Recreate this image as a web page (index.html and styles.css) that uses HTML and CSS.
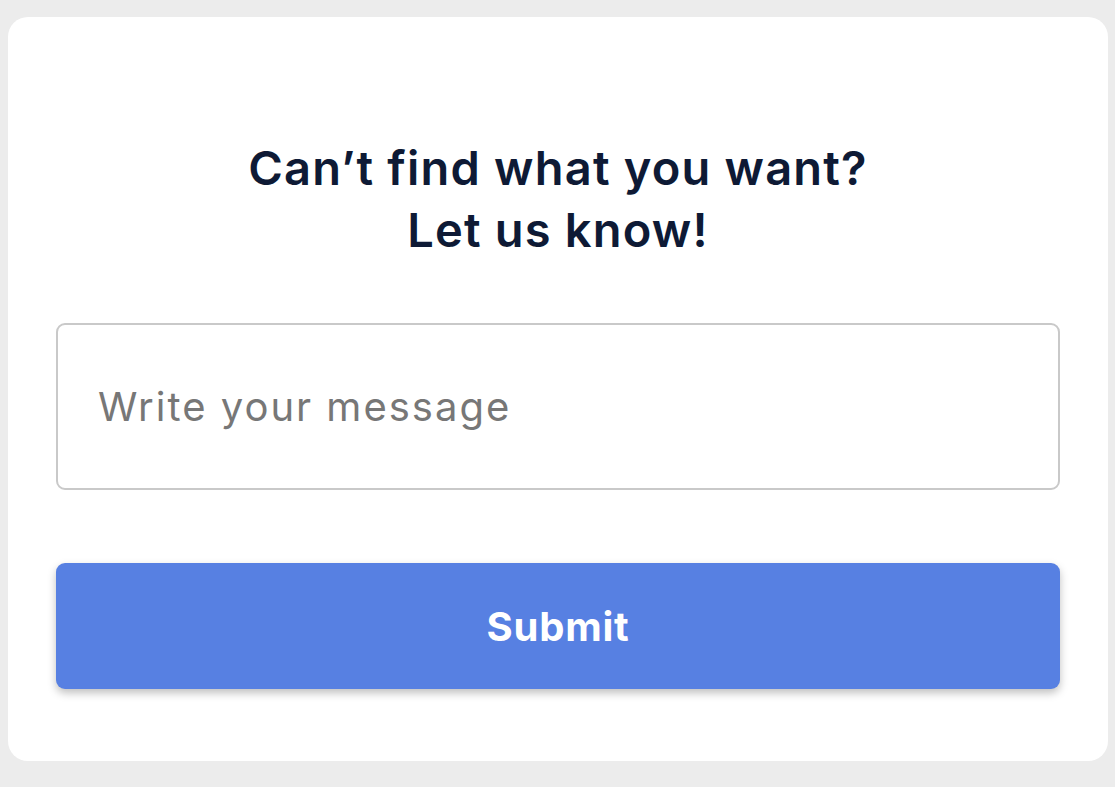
FILE: index.html
```html
<!DOCTYPE html>
<html>
<head>
<meta charset="utf-8">
<link rel="stylesheet" href="styles.css">
</head>
<body>
<div class="card">
  <h1 class="title">Can’t find what you want?<br>Let us know!</h1>
  <div class="field"><span class="placeholder">Write your message</span></div>
  <button class="submit">Submit</button>
</div>
</body>
</html>
```
FILE: styles.css
```css
html, body { margin: 0; padding: 0; }
body {
  background: #ececec;
  padding: 17px 7px 0 8px;
  font-family: Inter, "Open Sans", sans-serif;
  height: 787px;
  box-sizing: border-box;
}
.card {
  background: #fff;
  border-radius: 20px;
  width: 1100px;
  height: 744px;
  box-sizing: border-box;
  padding: 120px 48px 0 48px;
  display: flex;
  flex-direction: column;
}
.title {
  margin: 0;
  text-align: center;
  font-size: 47px;
  line-height: 62px;
  letter-spacing: 1.2px;
  font-weight: 600;
  color: #0e1a35;
}
.field {
  margin-top: 62px;
  height: 167px;
  border: 2px solid #c9c9c9;
  border-radius: 9px;
  box-sizing: border-box;
  display: flex;
  align-items: center;
  padding-left: 40px;
}
.placeholder {
  font-size: 40px;
  letter-spacing: 2px;
  color: #777;
}
.submit {
  margin-top: 73px;
  height: 126px;
  border: none;
  border-radius: 9px;
  background: #5780e2;
  color: #fff;
  font-family: Inter, "Open Sans", sans-serif;
  font-weight: 700;
  font-size: 40px;
  letter-spacing: 0.8px;
  box-shadow: 0 4px 8px rgba(0,0,0,0.25);
}
```
